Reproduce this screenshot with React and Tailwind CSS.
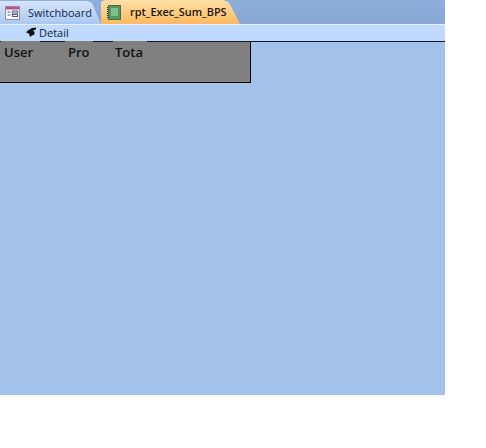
export default function App() {
  return (
    <div className="w-[486px] h-[448px] bg-white overflow-hidden" style={{ fontFamily: '"Open Sans", "Noto Sans", sans-serif' }}>
      <div className="w-[445px] h-[395px] bg-[#a3c2ea] flex flex-col">
        <div className="h-[24px] bg-gradient-to-b from-[#8eaedb] to-[#86a6d3] flex items-end shrink-0">
          <div className="w-[101px] h-[23px] bg-gradient-to-b from-[#d6e6fb] to-[#a9c8f0] flex items-center pl-[5px] gap-[8px] shrink-0 [clip-path:polygon(0_0,86%_0,91%_8%,100%_100%,0_100%)]">
            <svg width="15" height="14" viewBox="0 0 15 14">
              <rect x="0.5" y="0.5" width="14" height="13" fill="#fff" stroke="#8a8fc0" />
              <rect x="1" y="1" width="13" height="2.5" fill="#c0507a" />
              <path d="M2.5 6h3M2.5 9h3" stroke="#4a5a90" strokeWidth="1.2" />
              <rect x="7.5" y="5" width="5" height="2" fill="none" stroke="#4a5a90" />
              <rect x="7.5" y="8.5" width="5" height="2" fill="none" stroke="#4a5a90" />
            </svg>
            <span className="text-[11px] leading-none text-[#10264a] whitespace-nowrap">Switchboard</span>
          </div>
          <div className="w-[139px] h-[24px] bg-gradient-to-b from-[#fde0a6] to-[#fdb95f] flex items-center pl-[6px] gap-[9px] shrink-0 [clip-path:polygon(0_8%,3%_0,88%_0,92%_10%,100%_100%,0_100%)]">
            <svg width="14" height="15" viewBox="0 0 14 15">
              <rect x="1.5" y="0.5" width="12" height="14" fill="#4f9a5c" stroke="#4a6a50" />
              <rect x="4" y="3" width="7" height="8" fill="#7cc08a" />
              <path d="M0.5 2v11" stroke="#222" strokeDasharray="1 1" />
            </svg>
            <span className="text-[10.9px] leading-none font-semibold text-[#1a1408] whitespace-nowrap">rpt_Exec_Sum_BPS</span>
          </div>
        </div>
        <div className="h-px bg-[#e8f2ff] shrink-0" />
        <div className="h-[16px] pb-[2px] bg-[#bfdafc] flex items-center pl-[26px] gap-[2px] shrink-0">
          <svg width="11" height="11" viewBox="0 0 11 11">
            <path d="M10 0.5 6 1 1 4 0.5 6 3 6.5 4 10 6 8.5 8.5 7.5V5L7 3.5 10 2.5Z" fill="#111" />
          </svg>
          <span className="text-[11px] leading-none text-[#10243f]">Detail</span>
        </div>
        <div className="h-px flex shrink-0 bg-[#101828]">
          <div className="w-px" />
          <div className="w-[39px] bg-[#808080]" />
          <div className="w-[25px]" />
          <div className="w-[28px] bg-[#808080]" />
          <div className="w-[20px]" />
          <div className="w-[34px] bg-[#808080]" />
        </div>
        <div className="w-[251px] h-[41px] bg-[#808080] border-r border-b border-black flex items-start pt-[2px] text-[13px] leading-[16px] font-semibold text-[#111] shrink-0">
          <span className="w-[68px] pl-[4px]">User</span>
          <span className="w-[47px]">Pro</span>
          <span>Tota</span>
        </div>
      </div>
    </div>
  );
}
